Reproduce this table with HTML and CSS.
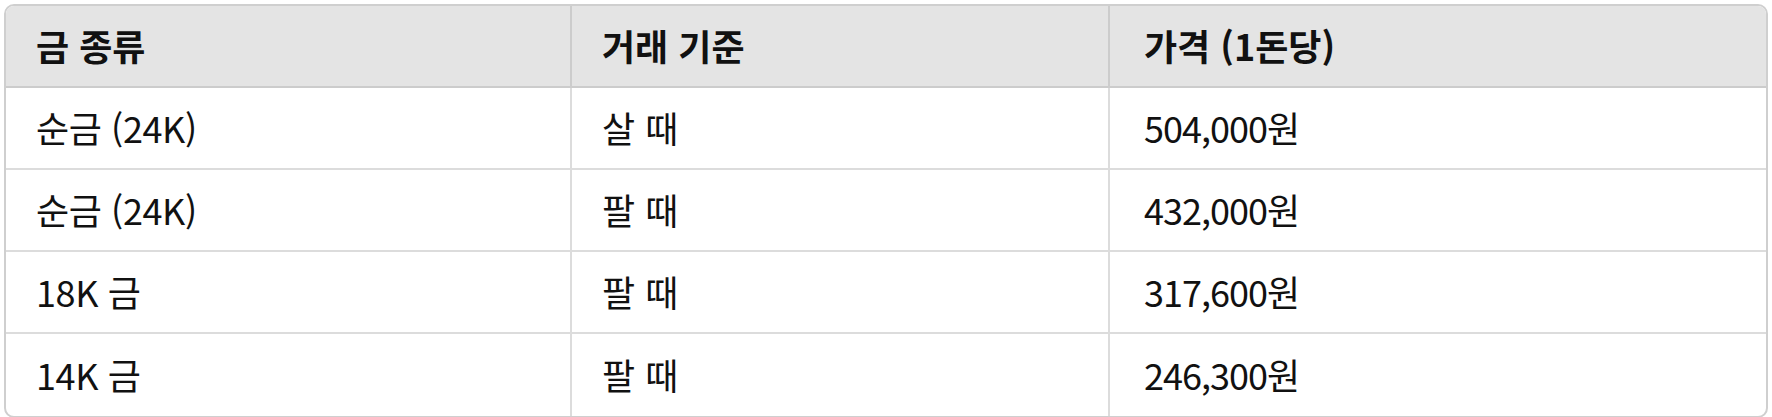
FILE: index.html
```html
<!DOCTYPE html>
<html lang="ko">
<head>
<meta charset="utf-8">
<title>금 시세</title>
<link rel="stylesheet" href="styles.css">
</head>
<body>
<div class="wrap">
  <table class="gold">
    <colgroup>
      <col class="c1">
      <col class="c2">
      <col class="c3">
    </colgroup>
    <thead>
      <tr>
        <th>금 종류</th>
        <th>거래 기준</th>
        <th class="last">가격 (1돈당)</th>
      </tr>
    </thead>
    <tbody>
      <tr>
        <td class="num-ish">순금 (24K)</td>
        <td>살 때</td>
        <td class="last price">504,000원</td>
      </tr>
      <tr>
        <td class="num-ish">순금 (24K)</td>
        <td>팔 때</td>
        <td class="last price">432,000원</td>
      </tr>
      <tr>
        <td class="num-ish">18K 금</td>
        <td>팔 때</td>
        <td class="last price">317,600원</td>
      </tr>
      <tr>
        <td class="num-ish">14K 금</td>
        <td>팔 때</td>
        <td class="last price">246,300원</td>
      </tr>
    </tbody>
  </table>
</div>
</body>
</html>
```

FILE: styles.css
```css
html, body {
  margin: 0;
  padding: 0;
  background: #ffffff;
}

.wrap {
  padding: 4px 4px 0 4px;
}

.gold {
  width: 100%;
  table-layout: fixed;
  border-collapse: separate;
  border-spacing: 0;
  border: 2px solid #cfcfcf;
  border-radius: 10px;
  overflow: hidden;
  font-family: "Noto Sans CJK KR", "Noto Sans", sans-serif;
  font-size: 36px;
  color: #111111;
}

.c1 { width: 566px; }
.c2 { width: 538px; }
.c3 { width: auto; }

.gold th,
.gold td {
  height: 82px;
  padding: 0 30px;
  text-align: left;
  vertical-align: middle;
  border-right: 2px solid #dcdcdc;
  border-bottom: 2px solid #dcdcdc;
  box-sizing: border-box;
  line-height: 1.2;
}

.gold th {
  background: #e4e4e4;
  font-weight: 700;
  border-right-color: #cccccc;
  border-bottom-color: #cccccc;
}

.gold th.last,
.gold td.last {
  border-right: none;
  padding-left: 34px;
}

.gold td.price {
  letter-spacing: -1px;
}

.gold td.num-ish {
  letter-spacing: -0.4px;
}

.gold tbody tr:last-child td {
  border-bottom: none;
}
```
